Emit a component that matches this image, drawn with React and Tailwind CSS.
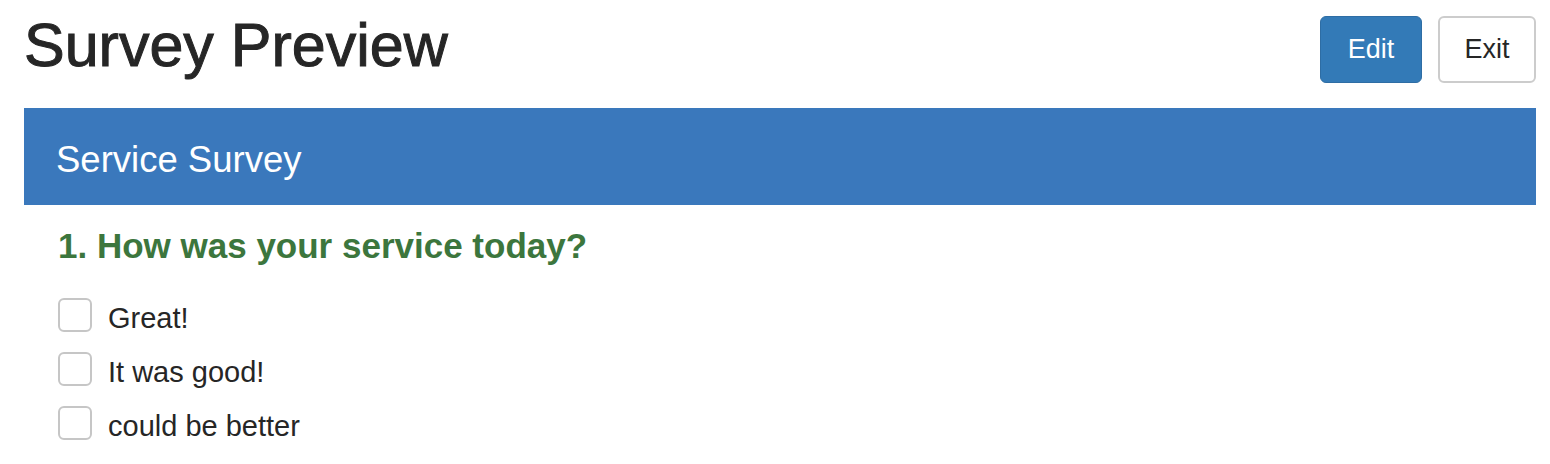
import { useState } from "react";

const OPTIONS = ["Great!", "It was good!", "could be better"];

function CheckRow({ label, checked, onToggle }) {
  return (
    <label className="flex items-start gap-[16px] h-[34px] cursor-pointer">
      <span
        onClick={onToggle}
        className="w-[34px] h-[34px] shrink-0 rounded-[6px] border-2 border-[#c6c6c6] bg-white flex items-center justify-center text-[#337ab7] text-[22px] leading-none"
      >
        {checked ? "✓" : ""}
      </span>
      <span className="text-[29px] leading-[34px] mt-[3px] text-[#262626]">{label}</span>
    </label>
  );
}

export default function App() {
  const [checked, setChecked] = useState({});

  const toggle = (opt) => setChecked((c) => ({ ...c, [opt]: !c[opt] }));

  return (
    <div className="min-h-[464px] bg-white pl-[24px] pr-[14px] font-['Liberation_Sans',Arial,sans-serif]">
      {/* header */}
      <div className="flex justify-between items-start h-[108px]">
        <h1 className="text-[61px] leading-[60px] pt-[15px] text-[#262626] [-webkit-text-stroke:1px_#262626]">
          Survey Preview
        </h1>
        <div className="flex gap-[16px] mt-[16px]">
          <button className="w-[102px] h-[67px] rounded-[6px] bg-[#337ab7] border border-[#2e6da4] text-white text-[27px]">
            Edit
          </button>
          <button className="w-[98px] h-[67px] rounded-[6px] bg-white border-2 border-[#cccccc] text-[#262626] text-[27px]">
            Exit
          </button>
        </div>
      </div>

      {/* survey panel */}
      <div className="h-[97px] bg-[#3a78bc] pl-[32px] pt-[32px]">
        <h2 className="text-[36.5px] leading-[40px] text-white">Service Survey</h2>
      </div>

      <div className="pl-[34px]">
        <h3 className="mt-[21px] text-[35px] leading-[40px] font-bold text-[#3c763d]">
          1. How was your service today?
        </h3>
        <div className="mt-[32px] flex flex-col gap-[20px]">
          {OPTIONS.map((opt) => (
            <CheckRow key={opt} label={opt} checked={!!checked[opt]} onToggle={() => toggle(opt)} />
          ))}
        </div>
      </div>
    </div>
  );
}
